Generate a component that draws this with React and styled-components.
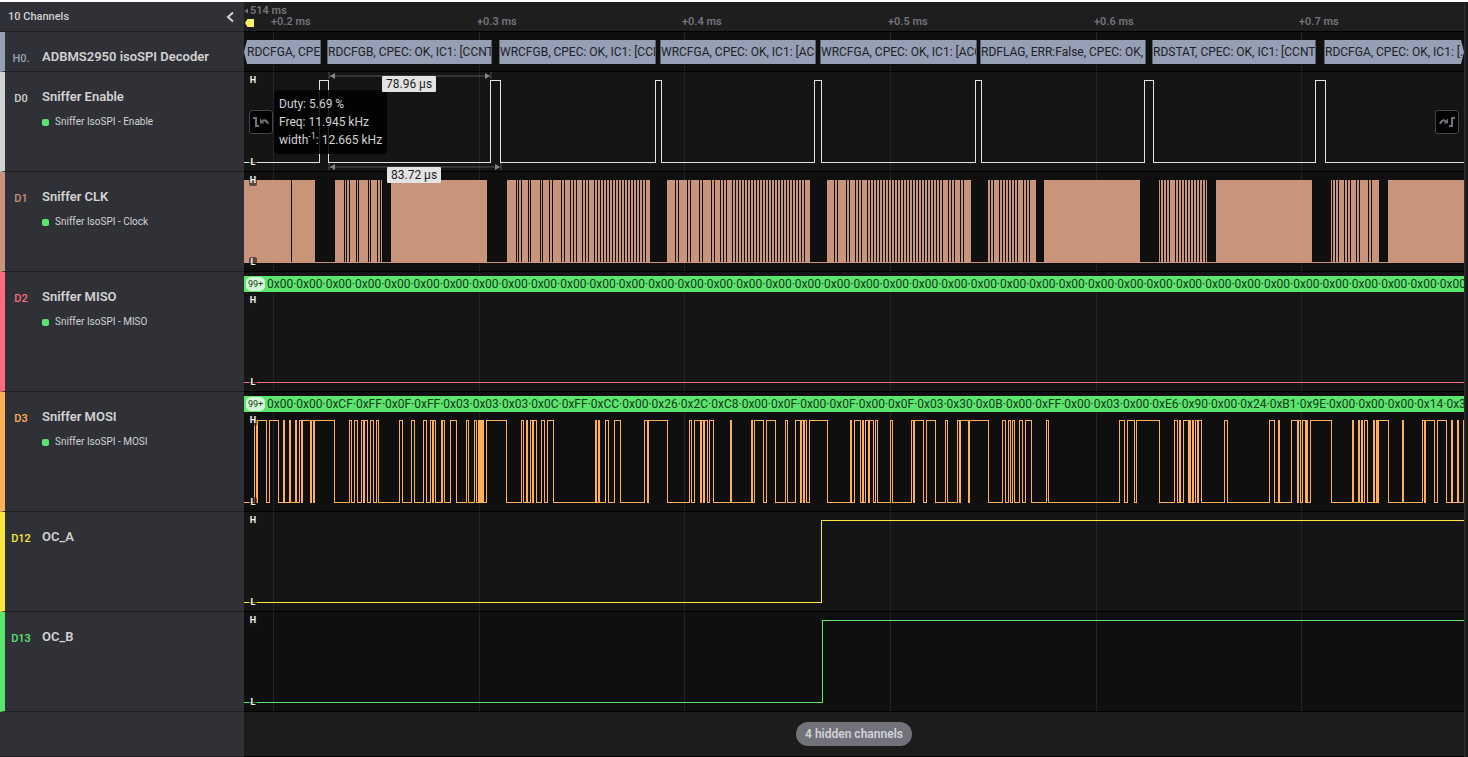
import React from "react";
import styled, { createGlobalStyle } from "styled-components";

const SPAN = 1220;
const HIGH = 8;
const LOW = 90;
const WAVE_HEIGHT = 99;
const pct = (x) => `${(x / SPAN) * 100}%`;

const GlobalStyle = createGlobalStyle`
  * { box-sizing: border-box; }
  body { margin: 0; background: #ffffff; }
  button { font: inherit; margin: 0; padding: 0; cursor: pointer; }
`;

const Page = styled.div`
  display: flex;
  min-height: 100vh;
  padding-top: 2px;
  font-family: Roboto, "Liberation Sans", sans-serif;
  font-size: 12px;
  color: #d2d2d4;
`;

const Analyzer = styled.main`
  flex: 1;
  min-width: 0;
  display: flex;
  flex-direction: column;
`;

const Rail = styled.div`
  width: 4px;
  background: #1c1c1c;
  border-left: 1px solid #2f3037;
`;

const Row = styled.div`
  display: grid;
  grid-template-columns: 244px minmax(0, 1fr);
  flex: ${(p) => (p.$grow ? "1" : "none")};
`;

const SideCell = styled.div`
  background: #303136;
  border-bottom: 1px solid #1f2024;
`;

const HeaderSide = styled(SideCell)`
  display: flex;
  align-items: center;
  justify-content: space-between;
  height: 30px;
  padding: 0 8px;
  font-size: 11px;
  font-weight: 500;
`;

const CollapseButton = styled.button`
  display: flex;
  border: 0;
  background: none;
  color: #d2d2d4;
`;

const ChannelCell = styled(SideCell)`
  display: grid;
  grid-template-columns: 32px 1fr;
  align-content: start;
  column-gap: 5px;
  row-gap: 8px;
  padding-top: 16px;
  border-left: 5px solid ${(p) => p.$color};
`;

const ChannelId = styled.span`
  padding-top: 2px;
  font-size: 11px;
  font-weight: 500;
  line-height: 18px;
  text-align: center;
  color: ${(p) => p.$color};
`;

const ChannelName = styled.span`
  font-size: 13px;
  font-weight: 600;
  line-height: 18px;
`;

const Analyzed = styled.span`
  grid-column: 2;
  display: flex;
  align-items: center;
  gap: 6px;
  font-size: 10px;
  line-height: 12px;
`;

const StatusDot = styled.i`
  width: 7px;
  height: 7px;
  border-radius: 2px;
  background: #5be56d;
`;

const Plot = styled.div`
  position: relative;
  background: ${(p) => (p.$raised ? "#151515" : "#0f0f0f")};
  border-bottom: 1px solid #000000;
`;

const Ruler = styled.div`
  position: relative;
  height: 30px;
  overflow: hidden;
  background: #1e1e1e;
  border-bottom: 1px solid #000000;
  font-size: 11px;
  font-weight: 600;
  line-height: 14px;
  color: #74747c;
`;

const TickLabel = styled.span`
  position: absolute;
  top: 13px;
  left: ${(p) => pct(p.$x)};
  margin-left: -2px;
  white-space: nowrap;
`;

const Origin = styled.div`
  display: flex;
  align-items: center;
  gap: 2px;
  height: 17px;
`;

const Flag = styled.svg`
  position: absolute;
  left: 1px;
  top: 17px;
`;

const GridSvg = styled.svg`
  position: absolute;
  inset: 0;
  width: 100%;
  height: 100%;
`;

const WaveSvg = styled.svg`
  position: relative;
  display: block;
  width: 100%;
  height: ${WAVE_HEIGHT}px;
`;

const FrameTrack = styled.div`
  position: relative;
  display: grid;
  grid-template-columns: ${(p) => p.$columns};
  height: 39px;
  padding: 8px 0 7px;
`;

const Frame = styled.div`
  grid-column: ${(p) => p.$column};
  overflow: hidden;
  padding-left: ${(p) => (p.$cut === "left" ? "3px" : "0")};
  border: solid #5c626f;
  border-width: ${(p) =>
    p.$cut === "left" ? "0 1px 0 0" : p.$cut === "right" ? "0 0 0 1px" : "0 1px"};
  background: #96a0b5;
  color: #1d2026;
  line-height: 24px;
  white-space: nowrap;
  clip-path: ${(p) =>
    p.$cut === "left"
      ? "polygon(3px 0, 100% 0, 100% 100%, 3px 100%, 0 50%)"
      : p.$cut === "right"
      ? "polygon(0 0, calc(100% - 3px) 0, 100% 50%, calc(100% - 3px) 100%, 0 100%)"
      : "none"};
`;

const ByteBar = styled.div`
  position: relative;
  display: flex;
  align-items: center;
  gap: 2px;
  height: 20px;
  border-top: 4px solid ${(p) => (p.$raised ? "#151515" : "#0f0f0f")};
  padding-left: 2px;
  overflow: hidden;
  background: #5be56d;
  color: #14381a;
  white-space: nowrap;
`;

const CountPill = styled.span`
  flex: none;
  width: 19px;
  height: 14px;
  border-radius: 5px;
  background: #d2f8d7;
  font-size: 9px;
  line-height: 14px;
  text-align: center;
`;

const Level = styled.span`
  position: absolute;
  left: 5px;
  bottom: ${(p) => (p.$low ? "3px" : "85px")};
  width: 8px;
  height: 11px;
  border-radius: 2px;
  background: rgba(24, 24, 24, 0.6);
  color: #f2f2f2;
  font-size: 9px;
  font-weight: 700;
  line-height: 11px;
  text-align: center;
`;

const EdgeButton = styled.button`
  position: absolute;
  top: 38px;
  ${(p) => p.$side}: 5px;
  display: flex;
  align-items: center;
  justify-content: center;
  width: 24px;
  height: 24px;
  border: 1px solid #45454b;
  border-radius: 3px;
  background: #000000;
  color: #74747c;
`;

const MeasureTag = styled.span`
  position: absolute;
  z-index: 2;
  left: ${(p) => pct(p.$x)};
  top: ${(p) => p.$top};
  padding: 0 4px;
  border-radius: 1px;
  background: #e4e4e4;
  color: #1d1d1d;
  line-height: 16px;
  white-space: nowrap;
`;

const Readout = styled.div`
  position: absolute;
  left: ${(p) => pct(p.$x)};
  top: 18px;
  width: 113px;
  padding: 5px;
  border-radius: 4px;
  background: rgba(0, 0, 0, 0.85);
  line-height: 18px;
  white-space: nowrap;

  sup {
    font-size: 9px;
    line-height: 0;
  }
`;

const FooterSide = styled.div`
  background: #303136;
  border-bottom: 1px solid #1f2024;
`;

const Footer = styled.div`
  display: flex;
  justify-content: center;
  align-items: flex-start;
  padding-top: 10px;
  background: #1c1c1c;
  border-bottom: 1px solid #000000;
`;

const HiddenButton = styled.button`
  height: 24px;
  padding: 0 9px;
  border: 0;
  border-radius: 12px;
  background: #72727a;
  color: #d2d2d6;
  font-weight: 600;
`;

const ticks = [
  { x: 29, label: "+0.2 ms" },
  { x: 235, label: "+0.3 ms" },
  { x: 440, label: "+0.4 ms" },
  { x: 646, label: "+0.5 ms" },
  { x: 852, label: "+0.6 ms" },
  { x: 1057, label: "+0.7 ms" },
];

const frames = [
  { start: 0, end: 77, text: "RDCFGA, CPEC", cut: "left" },
  { start: 83, end: 248, text: "RDCFGB, CPEC: OK, IC1: [CCNT" },
  { start: 255, end: 412, text: "WRCFGB, CPEC: OK, IC1: [CCN" },
  { start: 416, end: 572, text: "WRCFGA, CPEC: OK, IC1: [ACC" },
  { start: 576, end: 733, text: "WRCFGA, CPEC: OK, IC1: [ACC" },
  { start: 736, end: 902, text: "RDFLAG, ERR:False, CPEC: OK," },
  { start: 908, end: 1072, text: "RDSTAT, CPEC: OK, IC1: [CCNT" },
  { start: 1080, end: 1220, text: "RDCFGA, CPEC: OK, IC1: [...", cut: "right" },
];

const frameColumns = frames
  .flatMap((f, i) => {
    const own = `minmax(0, ${f.end - f.start}fr)`;
    const next = frames[i + 1];
    return next ? [own, `minmax(0, ${next.start - f.end}fr)`] : [own];
  })
  .join(" ");

const enableEdges = [75, 84, 246, 256, 411, 417, 570, 577, 731, 737, 900, 909, 1071, 1081];

const mosiEdges = [
  10, 12, 13, 22, 25, 34, 39, 40, 45, 46, 51, 52, 55, 57, 58, 66, 67, 69, 70, 90,
  105, 107, 110, 113, 117, 119, 120, 123, 126, 129, 132, 134, 155, 158, 167, 170,
  179, 182, 186, 188, 189, 191, 197, 198, 198, 200, 206, 212, 222, 224, 230, 232,
  234, 235, 236, 237, 238, 239, 242, 262, 277, 279, 282, 283, 286, 288, 289, 292,
  297, 300, 303, 309, 351, 352, 354, 355, 361, 364, 370, 376, 400, 403, 404, 423,
  445, 447, 450, 456, 457, 459, 460, 463, 465, 469, 486, 487, 507, 508, 510, 519,
  522, 531, 541, 543, 551, 556, 557, 559, 560, 562, 565, 583, 606, 607, 610, 616,
  618, 619, 621, 624, 625, 629, 631, 633, 646, 648, 667, 669, 670, 679, 682, 691,
  701, 703, 713, 715, 716, 724, 725, 744, 758, 761, 764, 766, 768, 770, 775, 778,
  781, 787, 802, 804, 875, 880, 883, 890, 892, 915, 930, 933, 935, 936, 939, 944,
  945, 946, 948, 949, 951, 953, 954, 957, 980, 983, 1025, 1030, 1034, 1035, 1047,
  1053, 1054, 1056, 1058, 1061, 1062, 1063, 1066, 1087, 1108, 1109, 1114, 1115,
  1117, 1118, 1120, 1123, 1129, 1130, 1132, 1133, 1134, 1144, 1158, 1159, 1178,
  1180, 1181, 1190, 1193, 1202, 1207, 1208, 1213, 1214, 1219,
];

const every3 = (from, to) => {
  const out = [];
  for (let x = from; x <= to; x += 3) out.push(x);
  return out;
};

const clockBursts = [
  [0, 71],
  [91, 138],
  [147, 243],
  [263, 406],
  [423, 566],
  [583, 727],
  [744, 792],
  [800, 896],
  [915, 963],
  [972, 1068],
  [1087, 1135],
  [1144, 1220],
];

const clockGaps = [
  47, 100, 102, 105, 112, 114, 124, 126, 133, 136,
  272, 274, 277, 284, 286, 296, 298, 305, 308, 317, 320, 326, 329, 332, 338, 341, 344,
  ...every3(350, 401),
  431, 434, 443, 446, 455, 458, 467, 470, 476, 479, 482,
  ...every3(488, 560),
  590, 593, 602, 605, 611, 614, 617,
  ...every3(623, 698),
  704, 707, 710, 716, 719,
  746, 749, 755,
  ...every3(758, 773),
  779, 782, 785,
  916, 919, 922, 925,
  ...every3(931, 961),
  1088, 1091, 1094, 1100, 1103, 1106, 1112, 1115, 1124, 1127,
];

const misoBytes = Array(41).fill("0x00").join("·");
const mosiBytes =
  "0x00·0x00·0xCF·0xFF·0x0F·0xFF·0x03·0x03·0x03·0x0C·0xFF·0xCC·0x00·0x26·0x2C·0xC8·0x00·0x0F·0x00·0x0F·0x00·0x0F·0x03·0x30·0x0B·0x00·0xFF·0x00·0x03·0x00·0xE6·0x90·0x00·0x24·0xB1·0x9E·0x00·0x00·0x00·0x14·0x30";

function Grid({ from = 0 }) {
  return (
    <GridSvg aria-hidden="true">
      {ticks.map((t) => (
        <line
          key={t.x}
          x1={pct(t.x + 0.5)}
          x2={pct(t.x + 0.5)}
          y1={from}
          y2="100%"
          stroke="#242426"
          shapeRendering="crispEdges"
        />
      ))}
    </GridSvg>
  );
}

function Wave({ children, label }) {
  return (
    <WaveSvg
      viewBox={`0 0 ${SPAN} ${WAVE_HEIGHT}`}
      preserveAspectRatio="none"
      role="img"
      aria-label={label}
    >
      {children}
    </WaveSvg>
  );
}

function DigitalTrace({ edges, color }) {
  let y = LOW + 0.5;
  let d = `M0 ${y}`;
  edges.forEach((x) => {
    d += `H${x + 0.5}`;
    y = y > 50 ? HIGH + 0.5 : LOW + 0.5;
    d += `V${y}`;
  });
  d += `H${SPAN}`;
  return <path d={d} fill="none" stroke={color} shapeRendering="crispEdges" />;
}

function ClockTrace({ color }) {
  return (
    <g shapeRendering="crispEdges">
      {clockBursts.map(([a, b]) => (
        <rect key={a} x={a} y={HIGH} width={b - a} height={LOW - HIGH} fill={color} />
      ))}
      {clockGaps.map((x) => (
        <rect key={x} x={x} y={HIGH} width="1" height={LOW - HIGH} fill="#0f0f0f" />
      ))}
      <rect x="0" y={LOW} width={SPAN} height="1" fill={color} />
    </g>
  );
}

function Span({ from, to, y }) {
  return (
    <g stroke="#55555c" fill="#85858d">
      <path d={`M${from} ${y - 4}v8M${to} ${y - 4}v8`} strokeDasharray="3 1" />
      <path d={`M${from} ${y}H${to}`} />
      <path
        stroke="none"
        d={`M${from + 1} ${y}l5 -3v6zM${to - 1} ${y}l-5 -3v6z`}
      />
    </g>
  );
}

function Levels() {
  return (
    <>
      <Level>H</Level>
      <Level $low>L</Level>
    </>
  );
}

function ChannelRow({ id, name, color, analyzer, raised, bytes, children }) {
  return (
    <Row>
      <ChannelCell $color={color}>
        <ChannelId $color={color}>{id}</ChannelId>
        <ChannelName>{name}</ChannelName>
        {analyzer && (
          <Analyzed>
            <StatusDot />
            {analyzer}
          </Analyzed>
        )}
      </ChannelCell>
      <Plot $raised={raised}>
        <Grid />
        {bytes && (
          <ByteBar $raised={raised}>
            <CountPill>99+</CountPill>
            <span>{bytes}</span>
          </ByteBar>
        )}
        {children}
      </Plot>
    </Row>
  );
}

function EdgeIcon({ next }) {
  return (
    <svg width="16" height="12" viewBox="0 0 16 12" fill="none" stroke="currentColor" strokeWidth="2">
      {next ? (
        <>
          <path d="M1 8C2 4 6 3 8 6.500" />
          <path d="M8.500 3v4H5" strokeWidth="1" />
          <path d="M10 10H13V2H16" />
        </>
      ) : (
        <>
          <path d="M15 8C14 4 10 3 8 6.500" />
          <path d="M7.500 3v4H11" strokeWidth="1" />
          <path d="M0 2H3V10H6" />
        </>
      )}
    </svg>
  );
}

export default function App() {
  return (
    <>
      <GlobalStyle />
      <Page>
        <Analyzer>
          <Row>
            <HeaderSide>
              <span>10 Channels</span>
              <CollapseButton aria-label="Collapse channels">
                <svg width="10" height="12" viewBox="0 0 10 12" fill="none" stroke="currentColor" strokeWidth="2">
                  <path d="M7 1.500L2 6l5 4.500" />
                </svg>
              </CollapseButton>
            </HeaderSide>
            <Ruler>
              <Grid from={26} />
              <Origin>
                <svg width="4" height="6" viewBox="0 0 4 6" fill="currentColor">
                  <path d="M4 0.500v5L0.500 3z" />
                </svg>
                514 ms
              </Origin>
              <Flag width="9" height="8" viewBox="0 0 9 8">
                <path d="M2.500 0H9V8H2.500L0 4z" fill="#fdf06b" />
              </Flag>
              {ticks.map((t) => (
                <TickLabel key={t.x} $x={t.x}>
                  {t.label}
                </TickLabel>
              ))}
            </Ruler>
          </Row>

          <ChannelRow id="H0." name="ADBMS2950 isoSPI Decoder" color="#96a0b5">
            <FrameTrack $columns={frameColumns}>
              {frames.map((f, i) => (
                <Frame key={f.start} $column={i * 2 + 1} $cut={f.cut}>
                  {f.text}
                </Frame>
              ))}
            </FrameTrack>
          </ChannelRow>

          <ChannelRow id="D0" name="Sniffer Enable" color="#d2d2d2" analyzer="Sniffer IsoSPI - Enable" raised>
            <Wave label="Sniffer Enable signal">
              <DigitalTrace edges={enableEdges} color="#e2e2e2" />
              <Span from={85} to={247} y={4} />
              <Span from={85} to={257} y={95} />
            </Wave>
            <Levels />
            <EdgeButton $side="left" aria-label="Previous edge">
              <EdgeIcon />
            </EdgeButton>
            <EdgeButton $side="right" aria-label="Next edge">
              <EdgeIcon next />
            </EdgeButton>
            <Readout $x={30}>
              Duty: 5.69 %<br />
              Freq: 11.945 kHz
              <br />
              width<sup>-1</sup>: 12.665 kHz
            </Readout>
            <MeasureTag $x={138} $top="4px">78.96 µs</MeasureTag>
            <MeasureTag $x={143} $top="95px">83.72 µs</MeasureTag>
          </ChannelRow>

          <ChannelRow id="D1" name="Sniffer CLK" color="#c8957a" analyzer="Sniffer IsoSPI - Clock">
            <Wave label="Sniffer CLK signal">
              <ClockTrace color="#c8957a" />
            </Wave>
            <Levels />
          </ChannelRow>

          <ChannelRow
            id="D2"
            name="Sniffer MISO"
            color="#ff6b7d"
            analyzer="Sniffer IsoSPI - MISO"
            bytes={misoBytes}
            raised
          >
            <Wave label="Sniffer MISO signal">
              <DigitalTrace edges={[]} color="#ff6b7d" />
            </Wave>
            <Levels />
          </ChannelRow>

          <ChannelRow
            id="D3"
            name="Sniffer MOSI"
            color="#ffb057"
            analyzer="Sniffer IsoSPI - MOSI"
            bytes={mosiBytes}
          >
            <Wave label="Sniffer MOSI signal">
              <DigitalTrace edges={mosiEdges} color="#ffb057" />
            </Wave>
            <Levels />
          </ChannelRow>

          <ChannelRow id="D12" name="OC_A" color="#fbe83c" raised>
            <Wave label="OC_A signal">
              <DigitalTrace edges={[577]} color="#fbe83c" />
            </Wave>
            <Levels />
          </ChannelRow>

          <ChannelRow id="D13" name="OC_B" color="#5be56d">
            <Wave label="OC_B signal">
              <DigitalTrace edges={[578]} color="#5be56d" />
            </Wave>
            <Levels />
          </ChannelRow>

          <Row $grow>
            <FooterSide />
            <Footer>
              <HiddenButton>4 hidden channels</HiddenButton>
            </Footer>
          </Row>
        </Analyzer>
        <Rail />
      </Page>
    </>
  );
}
